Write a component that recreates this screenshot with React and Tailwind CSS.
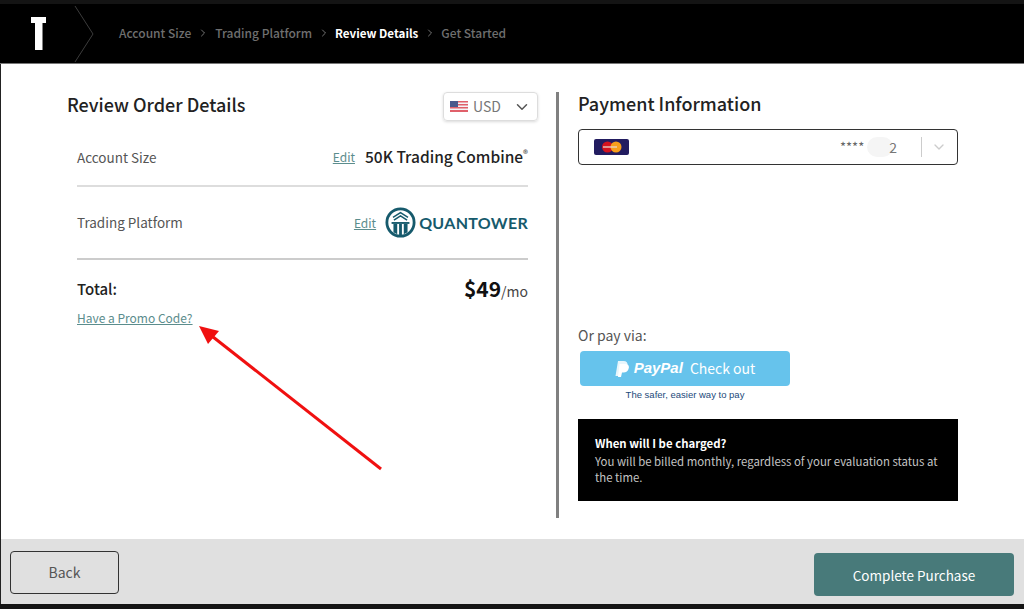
import { ChevronDown, ChevronRight } from 'lucide-react';

const FONT = 'font-["Noto_Sans_CJK_SC","Noto_Sans",sans-serif]';

function Logo() {
  return (
    <svg width="31" height="31" viewBox="0 0 33 33" fill="none">
      <circle cx="16.5" cy="16.5" r="14.5" stroke="#165a6c" strokeWidth="3" />
      <path d="M8.5 11 L16.5 6 L24.5 11" stroke="#165a6c" strokeWidth="1.6" />
      <path d="M9.5 14 L16.5 9.5 L23.5 14" stroke="#165a6c" strokeWidth="1.6" />
      <path d="M7 16 H26 V18 H7 Z" fill="#165a6c" />
      <path d="M9 18 H13 V29 L9 27 Z M15 18 H18 V31 H15 Z M20 18 H24 V27 L20 29 Z" fill="#165a6c" />
    </svg>
  );
}

function Flag() {
  return (
    <svg width="18" height="11" viewBox="0 0 18 11">
      <rect width="18" height="11" fill="#f4f4f6" />
      <path d="M0 0H18V1.5H0ZM0 3H18V4.5H0ZM0 6H18V7.5H0ZM0 9H18V11H0Z" fill="#e0606a" />
      <rect width="8" height="6" fill="#4b5a8c" />
    </svg>
  );
}

function Card() {
  return (
    <svg width="35" height="16" viewBox="0 0 35 16">
      <rect width="35" height="16" rx="2" fill="#221c60" />
      <circle cx="13.5" cy="8" r="5.5" fill="#d4121e" />
      <circle cx="22" cy="8" r="5.5" fill="#f79e1b" />
      <rect x="9" y="7.2" width="14" height="1.6" fill="#e8d8d0" opacity="0.8" />
    </svg>
  );
}

function Crumb({ children, active }) {
  return (
    <span className={active ? '-ml-px mt-px text-[11.6px] font-bold text-white' : 'text-[12px] font-medium text-[#6f6f6f]'}>
      {children}
    </span>
  );
}

function Sep() {
  return <ChevronRight size={12} strokeWidth={1.5} className="mx-[6px] text-[#9a9a9a]" />;
}

function EditLink() {
  return <a className="text-[12px] text-[#5b8d8d] underline">Edit</a>;
}

export default function App() {
  return (
    <div className={`${FONT} relative flex h-[609px] w-[1024px] flex-col overflow-hidden bg-[#141414]`}>
      <header className="mt-[4px] flex h-[60px] items-center border-b border-[#777] bg-black">
        <svg width="15" height="33" viewBox="0 0 15 33" className="ml-[31px]" fill="#fff">
          <path d="M0 0H15V6H11.5V33H4V6H0Z" />
        </svg>
        <svg width="22" height="58" viewBox="0 0 22 58" className="ml-[28px]" fill="none">
          <path d="M1 1 L19 29 L1 57" stroke="#3c3c3c" strokeWidth="1" />
        </svg>
        <nav className="ml-[23px] flex items-center">
          <Crumb>Account Size</Crumb>
          <Sep />
          <Crumb>Trading Platform</Crumb>
          <Sep />
          <Crumb active>Review Details</Crumb>
          <Sep />
          <span className="-ml-px flex"><Crumb>Get Started</Crumb></span>
        </nav>
      </header>

      <main className="flex h-[475px] border-l border-[#222] bg-white">
        <section className="ml-[66px] w-[471px] pt-[28px]">
          <div className="flex h-[29px] items-center justify-between">
            <h2 className="mb-[4px] text-[18px] font-medium text-[#222]">Review Order Details</h2>
            <div className="flex h-[29px] w-[95px] items-center rounded-[4px] border border-[#ddd] pl-[6px] shadow-[0_1px_3px_rgba(0,0,0,0.15)]">
              <Flag />
              <span className="ml-[5px] text-[14px] text-[#777]">USD</span>
              <ChevronDown size={18} strokeWidth={2} className="ml-[12px] text-[#555]" />
            </div>
          </div>

          <div className="ml-[10px] mt-[6px] w-[451px]">
            <div className="flex h-[60px] items-center justify-between border-b-2 border-[#ddd] pt-[2px]">
              <span className="text-[13.5px] text-[#555]">Account Size</span>
              <div className="flex items-center gap-[10px]">
                <EditLink />
                <span className="text-[15.5px] font-medium text-[#222]">
                  50K Trading Combine<sup className="text-[10px] text-[#555]">®</sup>
                </span>
              </div>
            </div>
            <div className="flex h-[73px] items-center justify-between border-b-2 border-[#ccc]">
              <span className="text-[13.5px] text-[#555]">Trading Platform</span>
              <div className="flex items-center">
                <EditLink />
                <span className="ml-[9px] flex"><Logo /></span>
                <span className="ml-[3px] font-['Lato',sans-serif] text-[16px] font-bold tracking-[0.3px] text-[#165a6c]">QUANTOWER</span>
              </div>
            </div>
            <div className="flex h-[49px] items-start justify-between pt-[18px]">
              <span className="text-[15px] font-medium text-[#222]">Total:</span>
              <span className="-mt-[5px] text-[14px] text-[#444]">
                <b className="text-[21px] font-bold text-[#111]">$49</b>/mo
              </span>
            </div>
            <a className="block text-[12px] text-[#5b8d8d] underline">Have a Promo Code?</a>
          </div>
        </section>

        <div className="ml-[18px] mt-[28px] h-[426px] w-[3px] bg-[#808080]" />

        <section className="ml-[19px] flex w-[380px] flex-col pt-[28px]">
          <h2 className="h-[27px] text-[18px] leading-[22px] font-medium text-[#222]">Payment Information</h2>
          <div className="mt-[10px] flex h-[36px] items-center rounded-[4px] border border-[#333] pl-[15px]">
            <Card />
            <span className="ml-auto text-[13px] text-[#666]">****</span>
            <span className="ml-[3px] h-[20px] w-[26px] rounded-full bg-[#f5f5f5]" />
            <span className="relative -ml-[4px] text-[14px] text-[#777]">2</span>
            <span className="ml-[24px] h-[20px] w-px bg-[#ccc]" />
            <ChevronDown size={16} strokeWidth={2} className="ml-[9px] mr-[10px] text-[#ccc]" />
          </div>

          <p className="mt-[160px] text-[14px] leading-[20px] text-[#555]">Or pay via:</p>
          <div className="ml-[2px] mt-[6px] flex h-[35px] w-[210px] items-center justify-center rounded-[4px] bg-[#66c3ec]">
            <svg width="14" height="16" viewBox="0 0 14 16" fill="#fff">
              <path d="M3 0H8.5C11.5 0 13 1.8 12.5 4.5C12 7.8 9.8 9.5 7 9.5H5L4 15H0.5Z" opacity="0.85" />
              <path d="M4.5 3H10C13 3 14.3 4.5 13.8 7C13.3 10 11 11.5 8.5 11.5H7L6 16H3Z" />
            </svg>
            <span className="ml-[5px] font-['Liberation_Sans',sans-serif] text-[15px] font-bold italic text-white">PayPal</span>
            <span className="ml-[7px] text-[14px] text-white">Check out</span>
          </div>
          <p className="ml-[2px] mt-[2px] w-[210px] text-center font-['Liberation_Sans',sans-serif] text-[9.5px] leading-[14px] text-[#1c4a7a]">
            The safer, easier way to pay
          </p>
          <div className="mt-[17px] h-[82px] bg-black px-[17px] pt-[16px] text-[11.4px] leading-[16px]">
            <p className="mb-[2px] font-bold text-white">When will I be charged?</p>
            <p className="text-[#c4c4c4]">You will be billed monthly, regardless of your evaluation status at the time.</p>
          </div>
        </section>
      </main>

      <footer className="flex h-[65px] items-start justify-between border-l border-[#222] bg-[#e0e0e0] pl-[9px] pr-[10px] pt-[12px]">
        <button className="h-[43px] w-[109px] rounded-[4px] border border-[#333] text-[14px] text-[#555]">Back</button>
        <button className="mt-[2px] h-[43px] w-[200px] rounded-[4px] bg-[#487a7a] pt-[2px] text-[13.5px] text-white">Complete Purchase</button>
      </footer>

      <svg className="pointer-events-none absolute left-[190px] top-[318px]" width="200" height="160" viewBox="0 0 200 160" fill="none">
        <path d="M191 151 L18 15" stroke="#f01010" strokeWidth="3" />
        <path d="M9 8 L29 13 L18 26 Z" fill="#f01010" />
      </svg>
    </div>
  );
}
